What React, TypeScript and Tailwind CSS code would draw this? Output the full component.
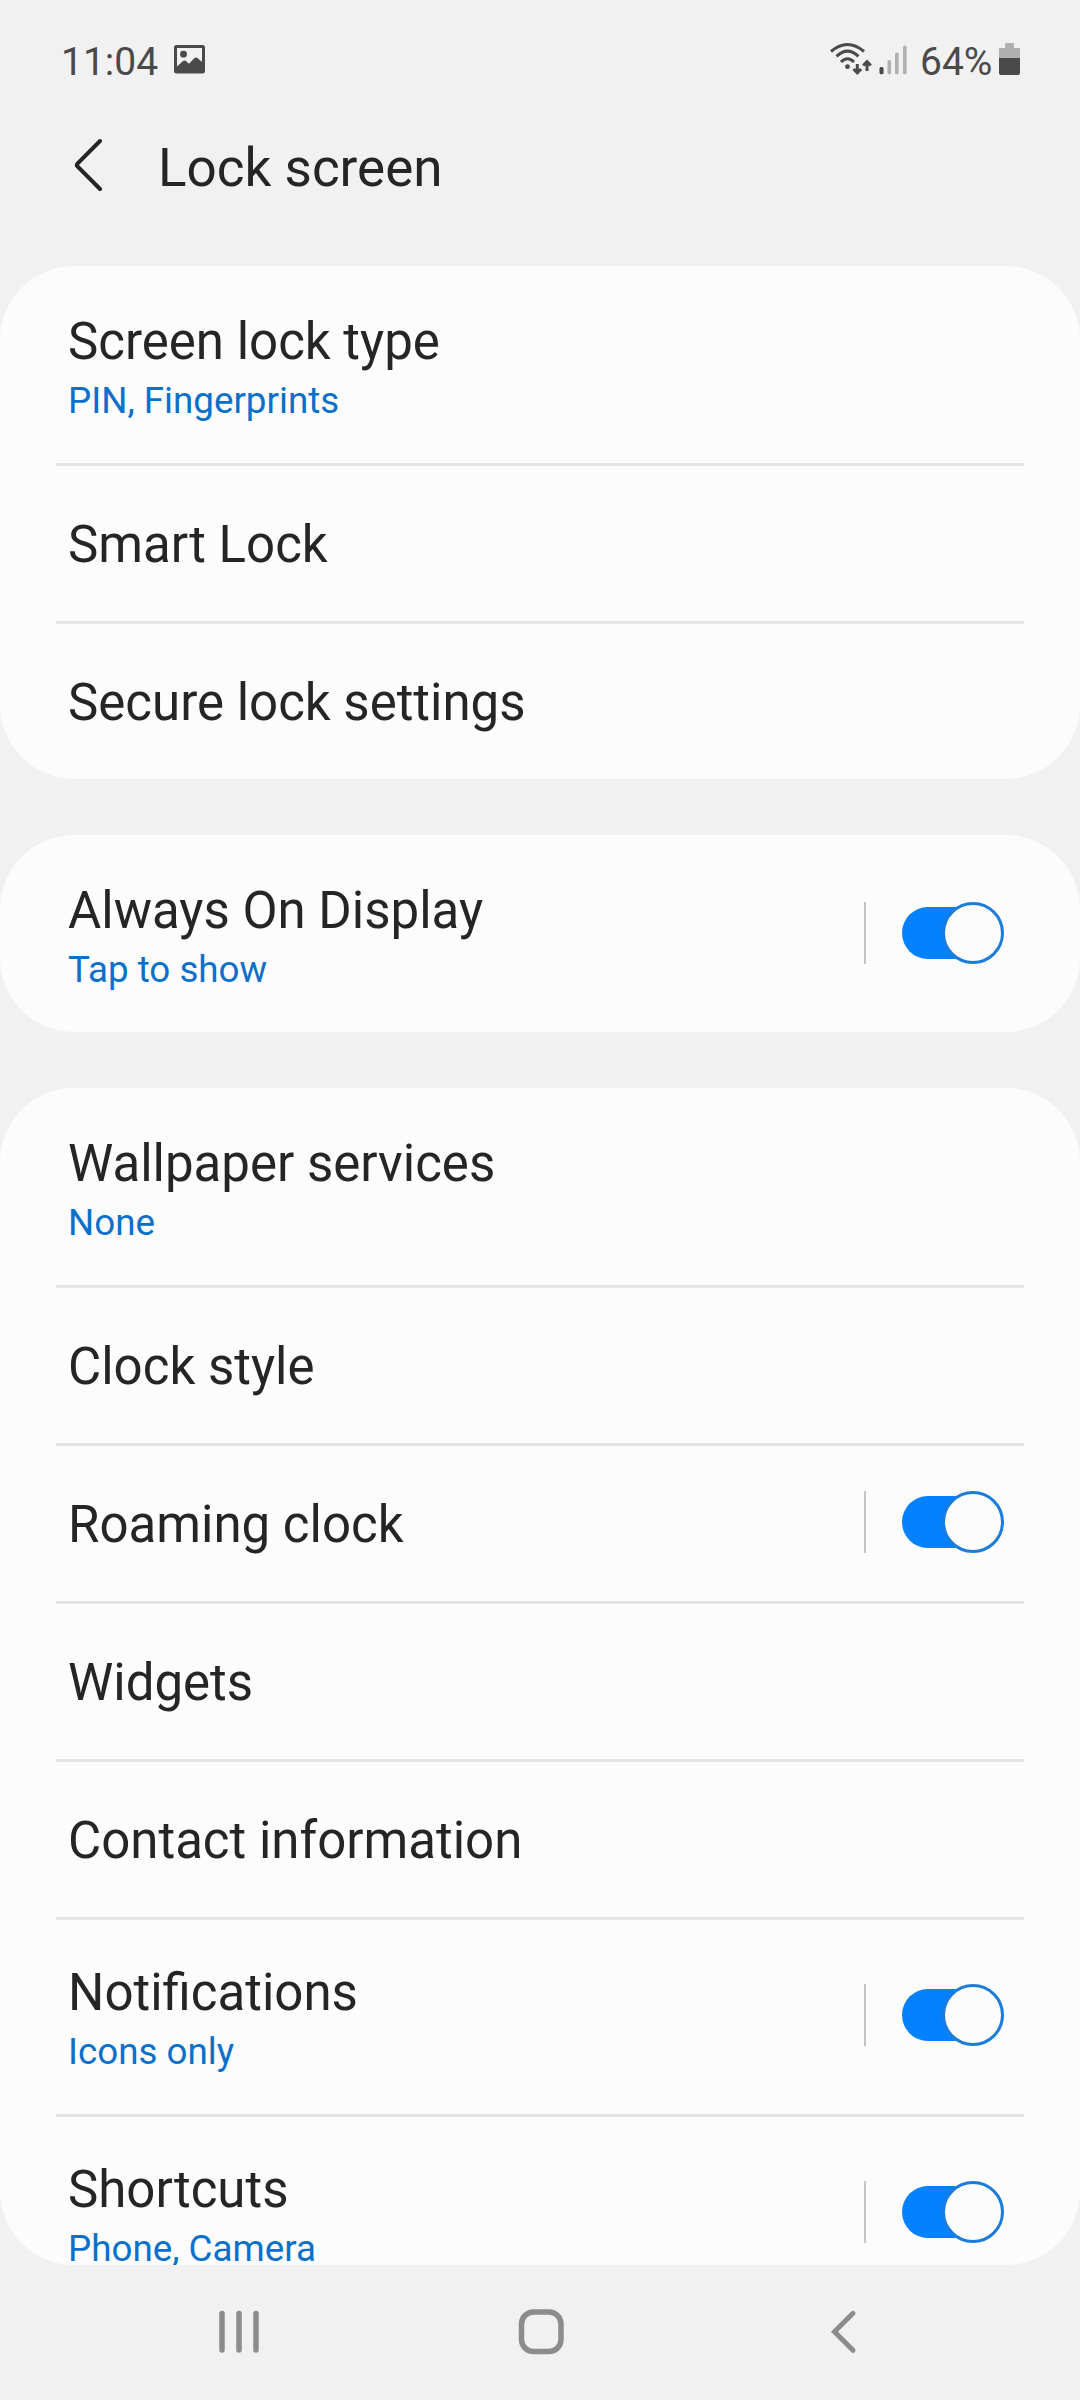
import { useState } from "react"

interface SettingItem {
  title: string
  summary?: string
  hasSwitch?: boolean
}

const groups: SettingItem[][] = [
  [
    { title: "Screen lock type", summary: "PIN, Fingerprints" },
    { title: "Smart Lock" },
    { title: "Secure lock settings" },
  ],
  [{ title: "Always On Display", summary: "Tap to show", hasSwitch: true }],
  [
    { title: "Wallpaper services", summary: "None" },
    { title: "Clock style" },
    { title: "Roaming clock", hasSwitch: true },
    { title: "Widgets" },
    { title: "Contact information" },
    { title: "Notifications", summary: "Icons only", hasSwitch: true },
    { title: "Shortcuts", summary: "Phone, Camera", hasSwitch: true },
  ],
]

function StatusBar() {
  return (
    <div className="flex h-[116px] shrink-0 items-start justify-between pt-[38px] pl-[61px] pr-[60px] text-[#4a4a4a]">
      <div className="flex items-start">
        <span className="mt-px w-[113px] text-[39px] leading-[46px] whitespace-nowrap">11:04</span>
        <svg width="31" height="29" viewBox="0 0 31 29" className="mt-[7px]">
          <path
            fillRule="evenodd"
            fill="currentColor"
            d="M2.500 0h26a2.500 2.500 0 0 1 2.500 2.500v23.500a2.500 2.500 0 0 1-2.500 2.500H2.500a2.500 2.500 0 0 1-2.500-2.500V2.500a2.500 2.500 0 0 1 2.500-2.500ZM3 3V21.500L9 16Q10.500 14.800 12 16L15 18.800L20.500 13Q22 11.800 23.500 13L28 17V3Z"
          />
          <circle cx="9.500" cy="9.200" r="3.400" fill="currentColor" />
        </svg>
      </div>

      <div className="flex items-start">
        <svg width="80" height="34" viewBox="0 0 80 34" className="mt-[4px]">
          <g fill="none" stroke="currentColor" strokeWidth="3">
            <path d="M2 9.500Q18.500 -4.500 35 9.500" />
            <path d="M7.500 14.300Q18.500 4 29.500 14.300" />
            <path d="M12 20Q18.500 13.500 25 20" />
            <path d="M28.300 22v8.500M24.500 27l3.800 3.800l3.800-3.800" />
            <path d="M38 29v-9M34.200 23.500l3.800-3.800l3.800 3.800" />
          </g>
          <circle cx="18.500" cy="24.700" r="2.400" fill="currentColor" />
          <rect x="50.500" y="25" width="4" height="7.300" rx="1.500" fill="currentColor" />
          <rect x="58.500" y="18" width="3.600" height="14.300" rx="1.500" fill="#b0b0b0" />
          <rect x="66" y="10.500" width="3.600" height="21.800" rx="1.500" fill="#b0b0b0" />
          <rect x="74" y="3.500" width="3.600" height="28.800" rx="1.500" fill="#b0b0b0" />
        </svg>
        <span className="mt-px ml-[11px] w-[79px] text-[39px] leading-[46px] whitespace-nowrap">64%</span>
        <svg width="21" height="32" viewBox="0 0 21 32" className="mt-[5px]">
          <path fill="#b0b0b0" d="M6 1q0-1 1-1h7q1 0 1 1v4h5q1 0 1 1v10H0V6q0-1 1-1h5Z" />
          <path fill="currentColor" d="M0 15h21v15q0 2-2 2H2q-2 0-2-2Z" />
        </svg>
      </div>
    </div>
  )
}

function Header() {
  return (
    <header className="flex h-[150px] shrink-0 items-start pl-[74px] text-[#252525]">
      <svg width="30" height="54" viewBox="0 0 30 54" className="mt-[22px]">
        <path
          d="M26 3L3.500 25.500Q2.200 27 3.500 28.500L26 51"
          fill="none"
          stroke="currentColor"
          strokeWidth="4"
          strokeLinecap="round"
        />
      </svg>
      <h1 className="ml-[54px] mt-[22px] text-[53px] leading-[61px] whitespace-nowrap">Lock screen</h1>
    </header>
  )
}

function Switch() {
  const [on, setOn] = useState(true)

  return (
    <button
      role="switch"
      aria-checked={on}
      onClick={() => setOn(!on)}
      className={`flex h-[62px] w-[102px] items-center ${on ? "justify-end" : "justify-start"}`}
    >
      <span className={`h-[52px] w-[78px] rounded-full ${on ? "-mr-[38px] bg-[#0381fe]" : "order-2 -ml-[38px] bg-[#9a9a9a]"}`} />
      <span
        className={`relative size-[62px] shrink-0 rounded-full border-3 bg-[#fcfcfc] ${on ? "border-[#1c7cd9]" : "border-[#9a9a9a]"}`}
      />
    </button>
  )
}

function SettingRow({ item, divided }: { item: SettingItem; divided: boolean }) {
  return (
    <div className={`relative flex shrink-0 items-center justify-between pl-[68px] pr-[76px] ${item.summary ? "h-[197px]" : "h-[158px]"}`}>
      {divided && <div className="absolute inset-x-[56px] top-0 h-[3px] bg-[#e4e4e4]" />}
      <div className="pt-[5px] whitespace-nowrap">
        <div className="text-[51px] leading-[60px] text-[#252525]">{item.title}</div>
        {item.summary && <div className="mt-[7px] text-[36.750px] leading-[44px] text-[#0a70c9]">{item.summary}</div>}
      </div>
      {item.hasSwitch && (
        <div className="flex items-center gap-9 pb-px">
          <div className="h-[62px] w-[2px] bg-[#c4c4c4]" />
          <Switch />
        </div>
      )}
    </div>
  )
}

function NavigationBar() {
  return (
    <nav className="flex h-[135px] shrink-0 items-start pt-[44px] pl-[218px] text-[#8c8c8c]">
      <svg width="42" height="46" viewBox="0 0 42 46">
        <path d="M4 4.500v36.500M21 4.500v36.500M38 4.500v36.500" stroke="currentColor" strokeWidth="5.500" strokeLinecap="round" />
      </svg>
      <svg width="46" height="46" viewBox="0 0 46 46" className="ml-[258px]">
        <rect x="3.500" y="3" width="39.500" height="39.500" rx="12" fill="none" stroke="currentColor" strokeWidth="5.500" />
      </svg>
      <svg width="28" height="46" viewBox="0 0 28 46" className="ml-[266px]">
        <path d="M23 4.300L4.500 22.800L23 41.300" fill="none" stroke="currentColor" strokeWidth="5" strokeLinecap="round" />
      </svg>
    </nav>
  )
}

export default function App() {
  return (
    <div className="flex h-[2400px] w-[1080px] flex-col overflow-hidden bg-[#f1f1f1] font-[Roboto,sans-serif]">
      <StatusBar />
      <Header />
      <main className="flex min-h-0 flex-1 flex-col gap-14 overflow-hidden rounded-b-[74px]">
        {groups.map((items, i) => (
          <section key={i} className="flex shrink-0 flex-col rounded-[74px] bg-[#fcfcfc]">
            {items.map((item, j) => (
              <SettingRow key={item.title} item={item} divided={j > 0} />
            ))}
          </section>
        ))}
      </main>
      <NavigationBar />
    </div>
  )
}
